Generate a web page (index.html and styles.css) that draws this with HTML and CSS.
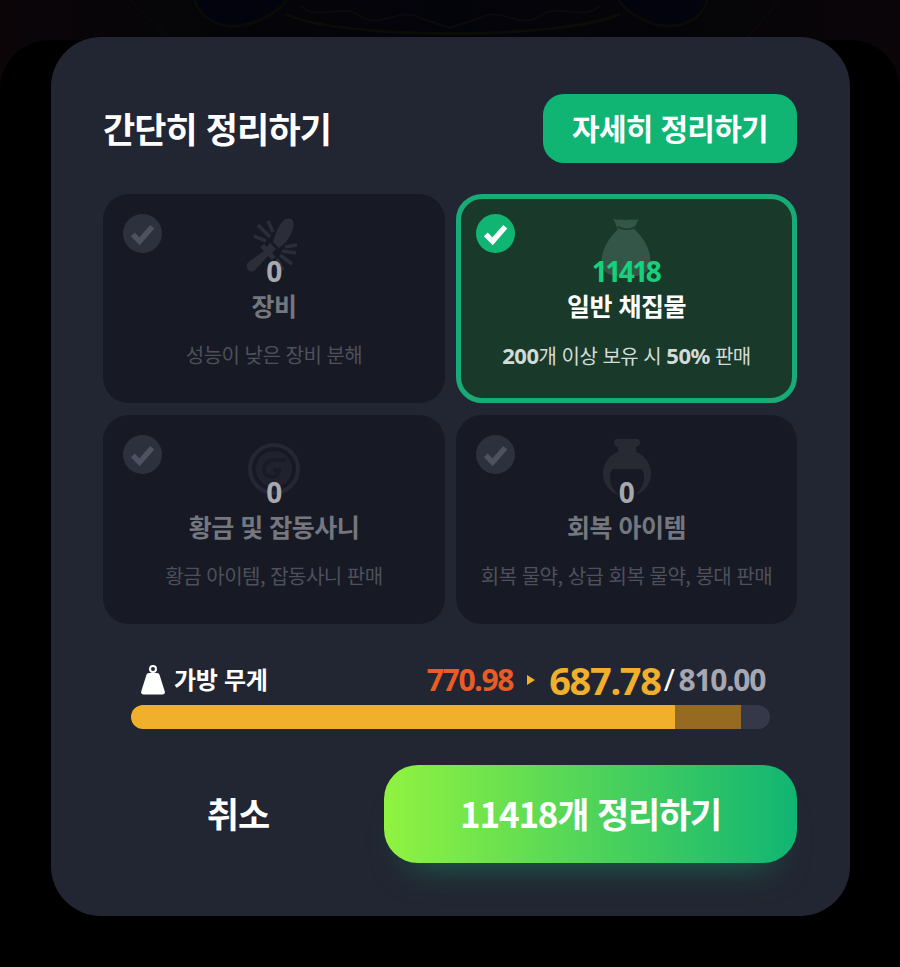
FILE: index.html
```html
<!DOCTYPE html>
<html lang="ko">
<head>
<meta charset="utf-8">
<title>간단히 정리하기</title>
<link rel="stylesheet" href="styles.css">
</head>
<body>
<svg class="ornament" viewBox="0 0 900 40" aria-hidden="true">
  <path d="M130 0 L172 40 M780 0 L745 40" fill="none" stroke="#09090d" stroke-width="2"/>
  <path d="M195 0 C198 16 218 28 238 26 C258 24 278 12 287 0 M618 0 C628 14 650 26 668 26 C690 26 704 14 707 0" fill="#03030d" stroke="#0a0a08" stroke-width="3"/>
  <path d="M285 14 C340 40 560 40 620 14" fill="none" stroke="#0c0c07" stroke-width="3"/>
  <path d="M300 6 C320 22 340 2 360 16 C380 30 400 6 420 18 L450 28 L480 18 C500 6 520 30 540 16 C560 2 580 22 600 6" fill="none" stroke="#0b0b0e" stroke-width="2"/>
</svg>
<div class="backdrop"></div>
<main class="panel">
  <header class="head">
    <h1 class="title">간단히 정리하기</h1>
    <button class="detail-btn">자세히 정리하기</button>
  </header>

  <section class="cards">
    <article class="card">
      <span class="check"><svg viewBox="0 0 40 40"><path d="M10 21 L17 28 L30 13" class="tick"/></svg></span>
      <svg class="art" viewBox="0 0 60 60">
        <path d="M41 1 C48 -1 51 3 49 10 C47 19 41 26 35 30 L29 24 C31 16 35 6 41 1 Z" fill="#2b2e39"/>
        <path d="M26 25 L32 31 L28 35 L32 39 L28 42 L24 38 L11 52 C8 55 4 53 3 50 C2 47 3 45 6 43 L20 33 L16 29 L20 26 L23 29 Z" fill="#2b2e39"/>
        <path d="M14 7 L26 19 M10 18 L22 23 M24 3 L29 14 M38 33 L52 35 M36 37 L48 46 M33 41 L39 52 M41 29 L53 27" stroke="#2b2e39" stroke-width="3.5" fill="none"/>
      </svg>
      <strong class="count">0</strong>
      <h2 class="name">장비</h2>
      <p class="desc">성능이 낮은 장비 분해</p>
    </article>

    <article class="card on">
      <span class="check"><svg viewBox="0 0 40 40"><path d="M10 21 L17 28 L30 13" class="tick"/></svg></span>
      <svg class="art" viewBox="0 0 60 60">
        <path d="M18 3 C21 6 25 3 30 5 C35 3 39 6 42 3 L39 10 C39 12 38 13 37 13 C46 20 53 32 53 44 C53 54 45 58 30 58 C15 58 7 54 7 44 C7 32 15 20 23 13 C22 13 21 12 21 10 Z" fill="#345648"/>
        <path d="M22 11 C28 14 34 14 39 11 L48 17" stroke="#1a3a2b" stroke-width="1.5" fill="none"/>
      </svg>
      <strong class="count">11418</strong>
      <h2 class="name">일반 채집물</h2>
      <p class="desc"><b>200</b>개 이상 보유 시 <b>50%</b> 판매</p>
    </article>

    <article class="card">
      <span class="check"><svg viewBox="0 0 40 40"><path d="M10 21 L17 28 L30 13" class="tick"/></svg></span>
      <svg class="art" viewBox="0 0 60 60">
        <circle cx="30" cy="30" r="24" fill="none" stroke="#252833" stroke-width="4"/>
        <circle cx="30" cy="30" r="18" fill="#20232d"/>
        <path d="M42 21 L29 21 C24 21 20 26 20 30 C20 35 24 38 29 38 C33 38 34 34 35 31 L29 31" fill="none" stroke="#191c26" stroke-width="4"/>
      </svg>
      <strong class="count">0</strong>
      <h2 class="name">황금 및 잡동사니</h2>
      <p class="desc">황금 아이템, 잡동사니 판매</p>
    </article>

    <article class="card">
      <span class="check"><svg viewBox="0 0 40 40"><path d="M10 21 L17 28 L30 13" class="tick"/></svg></span>
      <svg class="art" viewBox="0 0 60 60">
        <path d="M20 0 H40 C42 0 43 2 43 4 C43 6 42 7 39 8 V13 C48 16 54 25 54 35 C54 45 47 54 38 56 C44 51 47 45 47 38 C47 34 46 32 44 30 H16 C14 32 13 34 13 38 C13 45 16 51 22 56 C13 54 6 45 6 35 C6 25 12 16 21 13 V8 C18 7 17 6 17 4 C17 2 18 0 20 0 Z" fill="#282a33"/>
      </svg>
      <strong class="count">0</strong>
      <h2 class="name">회복 아이템</h2>
      <p class="desc">회복 물약, 상급 회복 물약, 붕대 판매</p>
    </article>
  </section>

  <section class="weight">
    <div class="weight-row">
      <div class="weight-label">
        <svg class="weight-icon" viewBox="0 0 24 30"><circle cx="12" cy="4" r="3" fill="none" stroke="#fff" stroke-width="2"/><path d="M8 8 H16 C17.5 8 18.2 8.7 18.6 10 L23.8 26.5 C24.3 28.3 23.2 29.5 21.5 29.5 H2.5 C.8 29.5 -.3 28.3 .2 26.5 L5.4 10 C5.8 8.7 6.5 8 8 8 Z" fill="#fff"/></svg>
        <span>가방 무게</span>
      </div>
      <div class="weight-nums">
        <span class="w-old">770.98</span>
        <svg class="w-arrow" viewBox="0 0 8 10"><path d="M0 0 L8 5 L0 10 Z" fill="#f0b02c"/></svg>
        <span class="w-new">687.78</span>
        <span class="w-slash">/</span>
        <span class="w-max">810.00</span>
      </div>
    </div>
    <div class="bar"><div class="bar-old" style="width:95.4%"><div class="bar-new" style="width:89.2%"></div></div></div>
  </section>

  <footer class="actions">
    <button class="cancel">취소</button>
    <button class="go">11418개 정리하기</button>
  </footer>
</main>
</body>
</html>
```

FILE: styles.css
```css
* { box-sizing: border-box; }
html, body { margin: 0; height: 967px; overflow: hidden; }
body {
  position: relative;
  background: linear-gradient(90deg, #0b0508 0, #050508 22%, #03030a 50%, #050508 78%, #0b0508 100%);
  font-family: "Noto Sans CJK KR", "Noto Sans", sans-serif;
  color: #fff;
  padding-top: 37px;
}
.ornament { position: absolute; left: 0; top: 0; width: 900px; height: 40px; }
.backdrop {
  position: absolute;
  left: 0; right: 0; top: 40px; bottom: 0;
  background: #000;
  border-radius: 50px 50px 0 0;
}
.panel {
  position: relative;
  width: 799px;
  height: 879px;
  margin-left: 51px;
  padding: 57px 53px 0 52px;
  background: #222632;
  border-radius: 50px;
}
.head { display: flex; justify-content: space-between; align-items: center; height: 69px; }
.title { margin: 0; padding-bottom: 3px; font-size: 35px; font-weight: 700; letter-spacing: -.9px; line-height: 1; }
.detail-btn {
  width: 254px; height: 69px;
  border: 0; border-radius: 21px;
  background: #10b573;
  color: #fff;
  font: 700 30px/1 "Noto Sans CJK KR", sans-serif;
  letter-spacing: -.7px;
  padding: 0 0 3px;
}
.cards {
  display: grid;
  grid-template-columns: 342px 341px;
  grid-template-rows: 209px 209px;
  column-gap: 11px;
  row-gap: 12px;
  margin-top: 31px;
}
.card {
  position: relative;
  display: flex; flex-direction: column; align-items: center;
  padding-top: 61px;
  background: #171a25;
  border-radius: 26px;
  color: #75777f;
}
.card.on {
  background: #193a2b;
  border: 5px solid #17ab75;
  padding-top: 56px;
  color: #fff;
}
.check {
  position: absolute; left: 20px; top: 20px;
  width: 39px; height: 39px;
  border-radius: 50%;
  background: #2d303d;
}
.card.on .check { left: 15px; top: 15px; background: #10b573; }
.check svg { display: block; width: 39px; height: 39px; }
.tick { fill: none; stroke: #4e515f; stroke-width: 5.5; }
.on .tick { stroke: #fff; }
.art { position: absolute; left: 50%; top: 24px; width: 60px; height: 60px; margin-left: -30px; }
.on .art { top: 16px; margin-left: -33px; width: 64px; height: 64px; }
.count {
  position: relative;
  margin-right: 2px;
  font: 700 28px/32px "Noto Sans", sans-serif;
  color: #a7a9ae;
  letter-spacing: -2.5px;
}
.on .count { color: #14d27c; }
.name { position: relative; margin: 1px 0 0; font-size: 25px; line-height: 34px; font-weight: 700; letter-spacing: -.5px; }
.desc { position: relative; margin: 18px 0 0; font-size: 20px; line-height: 30px; font-weight: 400; letter-spacing: -.5px; color: #4e505b; white-space: nowrap; }
.on .desc { color: #d4dad6; }
.desc b { font-size: 22px; font-weight: 700; font-family: "Noto Sans", sans-serif; }
.weight { margin: 35px 27px 0 28px; }
.weight-row { display: flex; justify-content: space-between; align-items: center; height: 41px; padding: 0 5px 0 10px; }
.weight-label { display: flex; align-items: center; gap: 9px; font-size: 24px; font-weight: 700; letter-spacing: -.3px; }
.weight-label span { padding-bottom: 3px; }
.weight-icon { width: 24px; height: 30px; }
.weight-nums { display: flex; align-items: center; font: 700 30px/1 "Noto Sans", sans-serif; letter-spacing: -1.3px; }
.w-old { color: #ea5b26; }
.w-arrow { width: 8px; height: 10px; margin: 0 14px; }
.w-new { color: #f0b02c; font-size: 38px; }
.w-slash { margin: 0 5px 0 3px; font-weight: 400; }
.w-max { color: #a5a7b2; }
.bar { height: 24px; margin-top: 5px; background: #343849; border-radius: 12px; overflow: hidden; }
.bar-old { height: 24px; background: #966b21; }
.bar-new { height: 24px; background: #f0b02c; border-radius: 12px 0 0 12px; }
.actions { display: flex; align-items: center; margin-top: 36px; }
.cancel {
  width: 281px; height: 98px;
  padding: 0 11px 3px 0;
  background: none; border: 0;
  color: #fff;
  font: 700 35px/1 "Noto Sans CJK KR", sans-serif;
  letter-spacing: -1px;
}
.go {
  width: 413px; height: 98px;
  padding: 0 0 3px;
  border: 0; border-radius: 34px;
  background: linear-gradient(90deg, #90f340, #10b573);
  color: #fff;
  font: 700 35px/1 "Noto Sans CJK KR", sans-serif;
  letter-spacing: -1.2px;
  box-shadow: 0 26px 36px -26px rgba(24, 180, 120, .5);
}
```
